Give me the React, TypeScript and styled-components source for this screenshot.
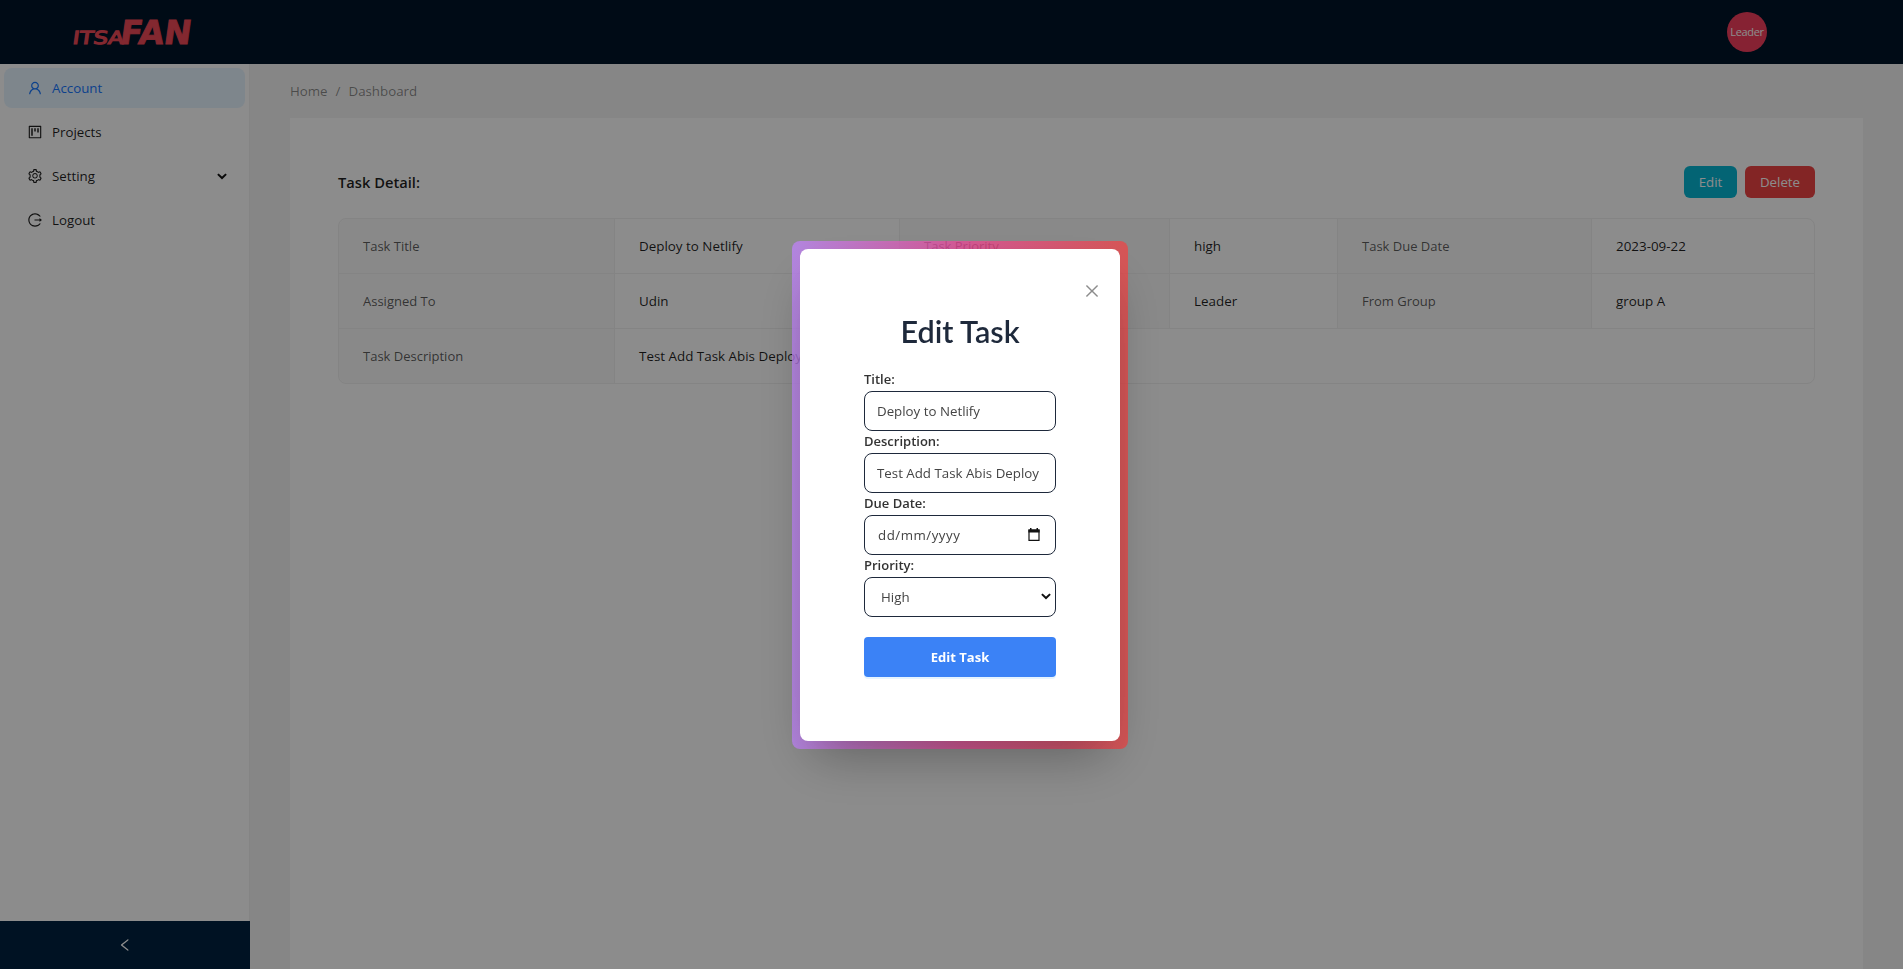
import React from "react";
import styled, { createGlobalStyle } from "styled-components";
import { AiOutlineUser, AiOutlineProject, AiOutlineSetting, AiOutlineLogout, AiOutlineLeft, AiOutlineClose } from "react-icons/ai";

const Global = createGlobalStyle`
  *, *::before, *::after { box-sizing: border-box; }
  body { margin: 0; overflow: hidden; font-family: "Open Sans", "Noto Sans", sans-serif; font-size: 13.3px; line-height: 22px; color: rgba(0,0,0,.88); }
`;
const Page = styled.div`height: 100vh; display: flex; flex-direction: column; background: #f5f5f5;`;
const Header = styled.header`flex: none; height: 64px; background: #001529; display: flex; align-items: center; justify-content: space-between; padding: 0 136px 0 73px;`;
const Logo = styled.svg`width: 118px; height: 26px; display: block; overflow: visible;`;
const Avatar = styled.div`width: 40px; height: 40px; border-radius: 50%; background: #f43f5e; color: #fff; display: flex; align-items: center; justify-content: center; font-size: 11px; letter-spacing: -0.35px;`;
const Body = styled.div`flex: 1; min-height: 0; display: flex;`;
const Sider = styled.aside`width: 250px; flex: none; background: #fff; display: flex; flex-direction: column;`;
const Menu = styled.nav`flex: 1; border-right: 1px solid #f0f0f0; padding: 4px; display: flex; flex-direction: column; gap: 4px;`;
const Item = styled.a<{ $active?: boolean }>`
  height: 40px; border-radius: 8px; padding: 0 18px 0 23px; display: flex; align-items: center; gap: 9px;
  background: ${(p) => (p.$active ? "#e6f4ff" : "transparent")}; color: ${(p) => (p.$active ? "#1677ff" : "rgba(0,0,0,.88)")};
  svg { flex: none; }
`;
const ItemLabel = styled.span`flex: 1;`;
const Trigger = styled.button`height: 48px; padding: 0; border: 0; background: #002140; color: #fff; display: flex; align-items: center; justify-content: center;`;
const Main = styled.main`flex: 1; padding: 16px 40px 0; display: flex; flex-direction: column;`;
const Crumbs = styled.div`height: 38px; flex: none; display: flex; gap: 8px; color: rgba(0,0,0,.45);`;
const Panel = styled.section`flex: 1; background: #fff; padding: 48px;`;
const PanelHead = styled.div`height: 32px; display: flex; align-items: center; gap: 8px; margin-bottom: 20px;`;
const PanelTitle = styled.h2`flex: 1; margin: 0; font-size: 14.7px; font-weight: 600;`;
const Button = styled.button<{ $bg: string; $w: number }>`width: ${(p) => p.$w}px; height: 32px; padding: 0; border: 0; border-radius: 6px; background: ${(p) => p.$bg}; color: #fff; font: inherit;`;
const Table = styled.div`display: grid; grid-template-columns: 276px 285px 270px 168px 254px 1fr; grid-auto-rows: 55px; height: 166px; border: 1px solid #f0f0f0; border-radius: 8px; overflow: hidden;`;
const Cell = styled.div<{ $head?: boolean; $span?: number; $edge?: boolean; $last?: boolean }>`
  grid-column: span ${(p) => p.$span ?? 1}; padding: 16px 24px; white-space: nowrap;
  font-size: ${(p) => (p.$head ? 13 : 13.4)}px;
  background: ${(p) => (p.$head ? "rgba(0,0,0,.02)" : "transparent")}; color: ${(p) => (p.$head ? "rgba(0,0,0,.65)" : "rgba(0,0,0,.88)")};
  border-right: ${(p) => (p.$edge ? "0" : "1px solid #f0f0f0")}; border-bottom: ${(p) => (p.$last ? "0" : "1px solid #f0f0f0")};
`;
const Overlay = styled.div`position: fixed; inset: 0; background: rgba(0,0,0,.45); display: flex; align-items: flex-start; justify-content: center; padding: 241px 0 0 17px;`;
const Frame = styled.div`width: 336px; height: 508px; padding: 8px; border-radius: 8px; background: linear-gradient(90deg, rgba(192,132,252,.75), rgba(236,72,153,.75), rgba(239,68,68,.75));`;
const Dialog = styled.form`position: relative; height: 492px; background: #fff; border-radius: 8px; padding: 64px; display: flex; flex-direction: column; box-shadow: 0 25px 50px -12px rgba(0,0,0,.32);`;
const Close = styled.button`position: absolute; top: 33px; right: 19px; width: 18px; height: 18px; padding: 0; border: 0; background: none; color: rgba(0,0,0,.45); svg { display: block; }`;
const Title = styled.h1`margin: 0 0 20px; height: 36px; font: 600 30.6px/37px Lato, sans-serif; color: #1e293b; text-align: center;`;
const Label = styled.label`height: 22px; font-size: 13px; font-weight: 600; line-height: 21px; color: #333;`;
const Field = styled.div<{ $left?: number; $right?: number; $spacing?: number }>`
  height: 40px; flex: none; border: 1px solid #1e293b; border-radius: 8px; display: flex; align-items: center; justify-content: space-between;
  padding: 0 ${(p) => p.$right ?? 12}px 1px ${(p) => p.$left ?? 12}px; color: #444; font-size: 13.3px; letter-spacing: ${(p) => p.$spacing ?? 0}px; white-space: nowrap;
`;
const Submit = styled.button`margin-top: 20px; height: 40px; flex: none; border: 0; border-radius: 4px; background: #3b82f6; color: #fff; font: 700 13px "Open Sans", sans-serif; box-shadow: 0 2px 0 rgba(5,145,255,.1);`;

const Chevron = () => (
  <svg width="10" height="7" viewBox="0 0 10 7"><path d="M.9 1.1 5 5 9.1 1.1" fill="none" stroke="#111" strokeWidth="2" /></svg>
);
const Calendar = () => (
  <svg width="12" height="13" viewBox="0 0 12 13"><path d="M1 2h10v10.4H1z" fill="none" stroke="#111" strokeWidth="1.2" /><path d="M.4 1.4h11.2v3H.4zM2 0h1.5v2H2zM8.5 0H10v2H8.5z" fill="#111" /></svg>
);

export default function App() {
  return (
    <Page>
      <Global />
      <Header>
        <Logo viewBox="0 0 118 26" fill="#ee4a58" stroke="#ee4a58" fontFamily="'DejaVu Sans', sans-serif">
          <g transform="translate(0 25) skewX(-8)">
            <text x="-1" y="-0.4" fontSize="18" strokeWidth="1.2" textLength="51" lengthAdjust="spacingAndGlyphs">ITSA</text>
            <text x="46" y="-0.4" fontSize="33" fontWeight="700" strokeWidth="0.9" textLength="71" lengthAdjust="spacingAndGlyphs">FAN</text>
          </g>
        </Logo>
        <Avatar>Leader</Avatar>
      </Header>
      <Body>
        <Sider>
          <Menu>
            <Item $active><AiOutlineUser size={16} /><ItemLabel>Account</ItemLabel></Item>
            <Item><AiOutlineProject size={16} /><ItemLabel>Projects</ItemLabel></Item>
            <Item><AiOutlineSetting size={16} /><ItemLabel>Setting</ItemLabel><Chevron /></Item>
            <Item><AiOutlineLogout size={16} /><ItemLabel>Logout</ItemLabel></Item>
          </Menu>
          <Trigger><AiOutlineLeft size={16} /></Trigger>
        </Sider>
        <Main>
          <Crumbs><span>Home</span><span>/</span><span>Dashboard</span></Crumbs>
          <Panel>
            <PanelHead>
              <PanelTitle>Task Detail:</PanelTitle>
              <Button $bg="#06b6d4" $w={53}>Edit</Button>
              <Button $bg="#ef4444" $w={70}>Delete</Button>
            </PanelHead>
            <Table>
              <Cell $head>Task Title</Cell><Cell>Deploy to Netlify</Cell>
              <Cell $head>Task Priority</Cell><Cell>high</Cell>
              <Cell $head>Task Due Date</Cell><Cell $edge>2023-09-22</Cell>
              <Cell $head>Assigned To</Cell><Cell>Udin</Cell>
              <Cell $head /><Cell>Leader</Cell>
              <Cell $head>From Group</Cell><Cell $edge>group A</Cell>
              <Cell $head $last>Task Description</Cell><Cell $span={5} $edge $last>Test Add Task Abis Deploy</Cell>
            </Table>
          </Panel>
        </Main>
      </Body>
      <Overlay>
        <Frame>
          <Dialog>
            <Close type="button"><AiOutlineClose size={18} /></Close>
            <Title>Edit Task</Title>
            <Label>Title:</Label><Field>Deploy to Netlify</Field>
            <Label>Description:</Label><Field>Test Add Task Abis Deploy</Field>
            <Label>Due Date:</Label>
            <Field $left={13} $right={15} $spacing={0.5}>dd/mm/yyyy<Calendar /></Field>
            <Label>Priority:</Label><Field $left={16} $right={4}>High<Chevron /></Field>
            <Submit type="button">Edit Task</Submit>
          </Dialog>
        </Frame>
      </Overlay>
    </Page>
  );
}
